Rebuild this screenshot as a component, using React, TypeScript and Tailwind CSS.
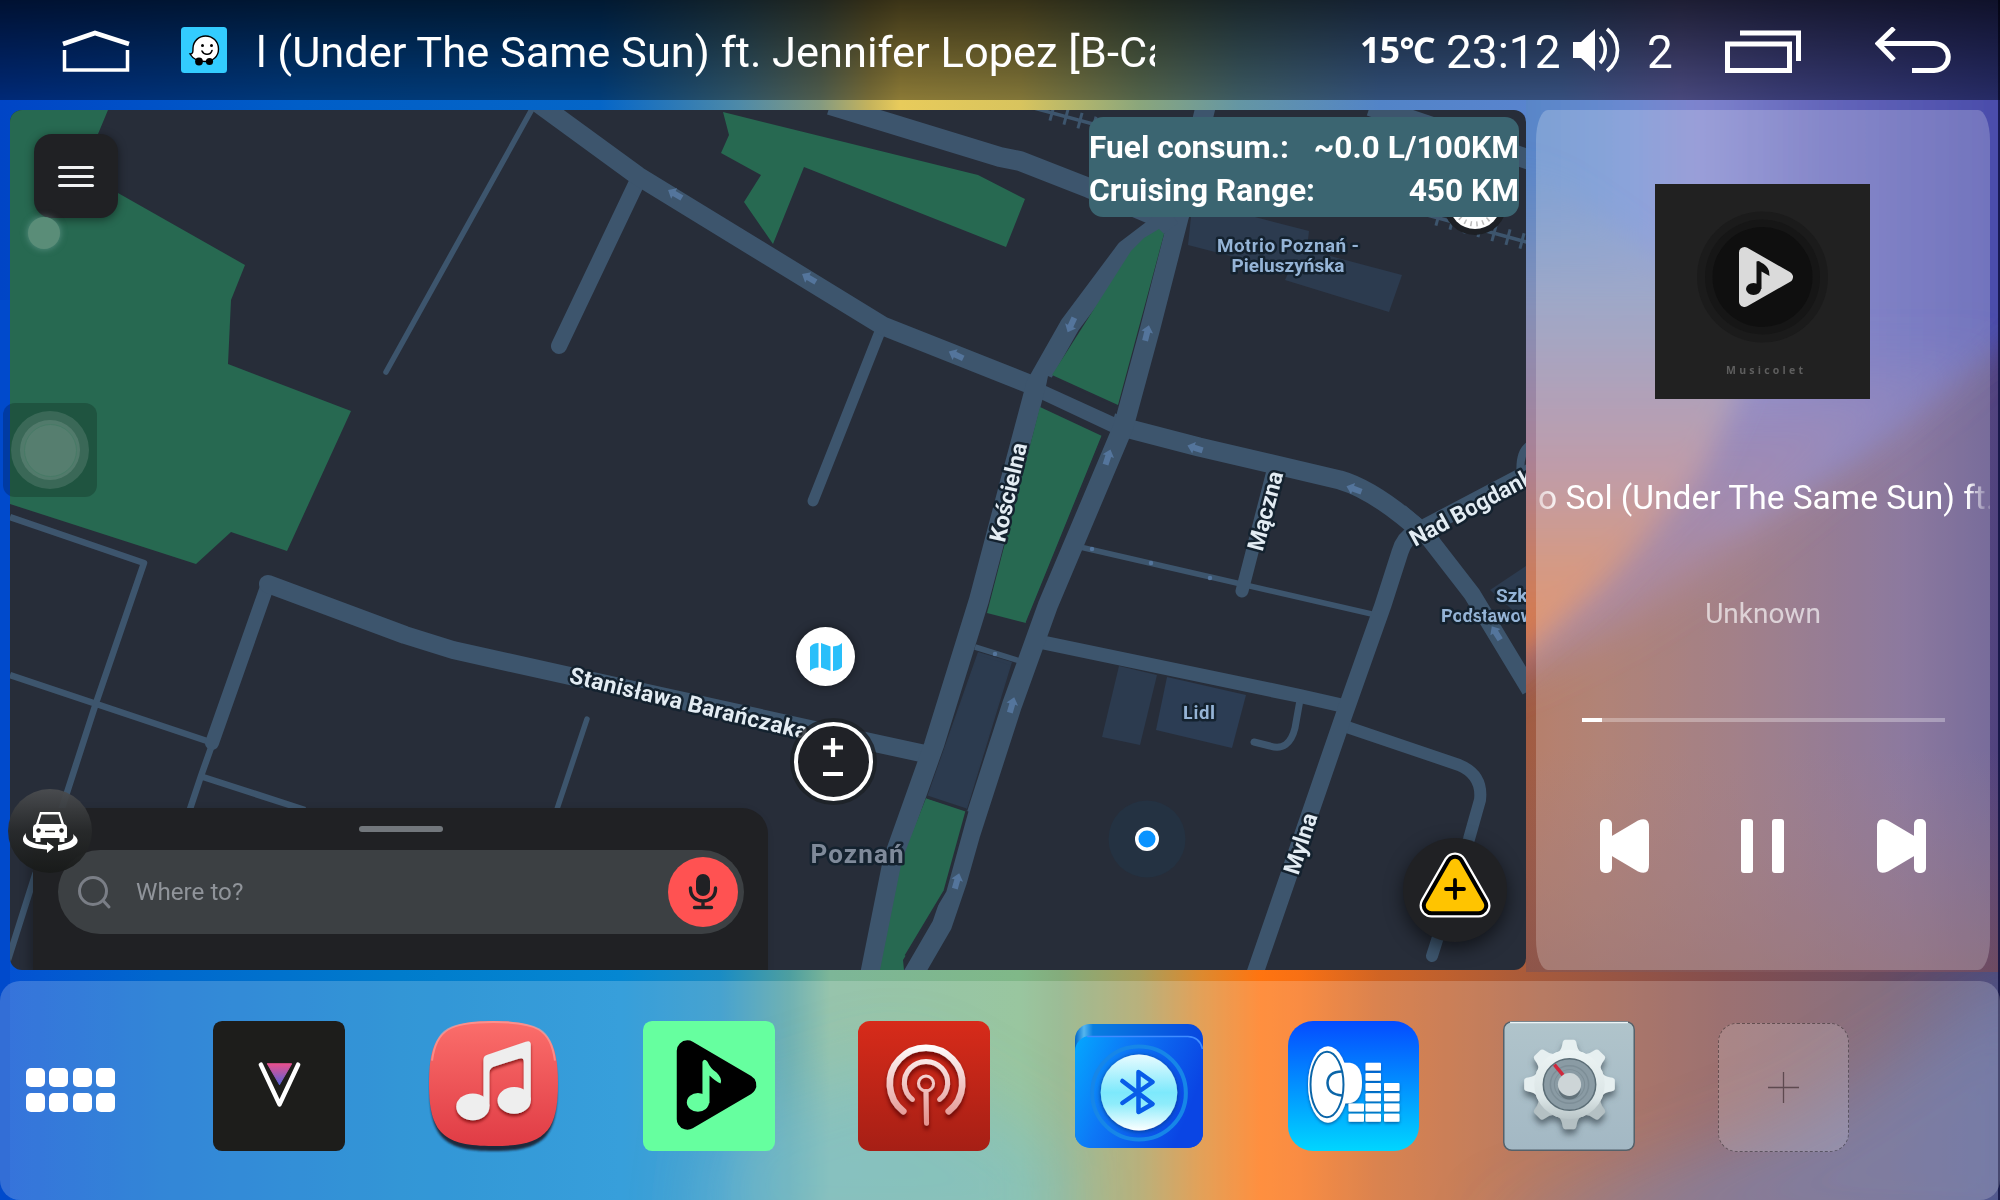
import React from "react";

const ROAD = "#3d556d";
const GREEN = "#276951";
const BUILDING = "#2c3b4f";

function Wallpaper() {
  return (
    <svg className="absolute inset-0 h-full w-full" viewBox="0 0 2000 1200" preserveAspectRatio="none">
      <defs>
        <linearGradient id="wTop">
          <stop offset="0" stopColor="#0045c6" />
          <stop offset=".15" stopColor="#005ec8" />
          <stop offset=".3" stopColor="#0566c8" />
          <stop offset=".37" stopColor="#4e8aa8" />
          <stop offset=".41" stopColor="#849a80" />
          <stop offset=".435" stopColor="#c5b35c" />
          <stop offset=".45" stopColor="#e8cb5b" />
          <stop offset=".51" stopColor="#d8c45e" />
          <stop offset=".57" stopColor="#8aa67c" />
          <stop offset=".62" stopColor="#6496a4" />
          <stop offset=".69" stopColor="#5284c8" />
          <stop offset=".78" stopColor="#5a84d0" />
          <stop offset=".84" stopColor="#7878cf" />
          <stop offset=".89" stopColor="#6064c2" />
          <stop offset="1" stopColor="#3f47a8" />
        </linearGradient>
        <linearGradient id="wBottom">
          <stop offset="0" stopColor="#0450d2" />
          <stop offset=".08" stopColor="#0068ce" />
          <stop offset=".2" stopColor="#007ccc" />
          <stop offset=".31" stopColor="#0587d2" />
          <stop offset=".36" stopColor="#1a8cc4" />
          <stop offset=".395" stopColor="#4e9fa0" />
          <stop offset=".415" stopColor="#7db698" />
          <stop offset=".51" stopColor="#80b888" />
          <stop offset=".53" stopColor="#84ac7c" />
          <stop offset=".57" stopColor="#a89e5c" />
          <stop offset=".6" stopColor="#dc8a30" />
          <stop offset=".63" stopColor="#ff7410" />
          <stop offset=".65" stopColor="#f87014" />
          <stop offset=".69" stopColor="#d06424" />
          <stop offset=".77" stopColor="#a65a3c" />
          <stop offset=".86" stopColor="#844e4e" />
          <stop offset=".94" stopColor="#6a4c60" />
          <stop offset="1" stopColor="#4e4a78" />
        </linearGradient>
        <linearGradient id="wLow">
          <stop offset="0" stopColor="#a25c42" />
          <stop offset=".15" stopColor="#9c6050" />
          <stop offset=".45" stopColor="#885d68" />
          <stop offset=".8" stopColor="#6c5484" />
          <stop offset="1" stopColor="#50427e" />
        </linearGradient>
        <linearGradient id="wFade" x1="0" y1="0" x2="0" y2="1">
          <stop offset="0" stopColor="#885d68" stopOpacity="0" />
          <stop offset="1" stopColor="#80504e" stopOpacity=".6" />
        </linearGradient>
        <linearGradient id="wUp" gradientUnits="userSpaceOnUse" x1="1526" y1="0" x2="2000" y2="0">
          <stop offset="0" stopColor="#5886c8" />
          <stop offset=".2" stopColor="#688ad0" />
          <stop offset=".36" stopColor="#7f84ce" />
          <stop offset=".6" stopColor="#6668bc" />
          <stop offset="1" stopColor="#4a4caa" />
        </linearGradient>
        <linearGradient id="wMauve" gradientUnits="userSpaceOnUse" x1="0" y1="340" x2="0" y2="570">
          <stop offset="0" stopColor="#796aab" stopOpacity="0" />
          <stop offset=".4" stopColor="#7d6aa8" />
          <stop offset="1" stopColor="#956a88" />
        </linearGradient>
        <linearGradient id="wWarm" gradientUnits="userSpaceOnUse" x1="0" y1="160" x2="0" y2="640">
          <stop offset="0" stopColor="#7c90ba" stopOpacity="0" />
          <stop offset=".3" stopColor="#8490b8" />
          <stop offset=".5" stopColor="#9c86a4" />
          <stop offset=".65" stopColor="#ae8090" />
          <stop offset=".82" stopColor="#c67e66" />
          <stop offset="1" stopColor="#d87a4c" />
        </linearGradient>
        <clipPath id="rightSide">
          <rect x="1526" y="100" width="474" height="872" />
        </clipPath>
        <filter id="soft" x="1200" y="-200" width="1200" height="1400" filterUnits="userSpaceOnUse">
          <feGaussianBlur stdDeviation="14" />
        </filter>
        <filter id="haze" x="1200" y="-200" width="1200" height="1400" filterUnits="userSpaceOnUse">
          <feGaussianBlur stdDeviation="22" />
        </filter>
        <filter id="softer" x="-400" y="600" width="2800" height="1000" filterUnits="userSpaceOnUse">
          <feGaussianBlur stdDeviation="35" />
        </filter>
      </defs>
      <rect width="2000" height="540" fill="url(#wTop)" />
      <rect y="540" width="2000" height="660" fill="url(#wBottom)" />
      <g filter="url(#softer)">
        <path d="M720 1120L900 1060L1060 1150V1260H700z" fill="#58aec8" opacity=".5" />
        <path d="M1480 1240L1800 1120L2050 960V1260z" fill="#5868a4" opacity=".6" />
      </g>
      <rect width="10" height="1000" y="300" fill="#004acc" />
      <g clipPath="url(#rightSide)">
        <rect x="1526" y="100" width="474" height="872" fill="url(#wLow)" />
        <rect x="1526" y="750" width="474" height="225" fill="url(#wFade)" />
        <path d="M1440 -20H2100V280L1990 355L1850 457L1733 520L1640 530L1440 540z" fill="url(#wUp)" filter="url(#soft)" />
        <path d="M2080 310L1990 360L1850 455L1733 548L1620 620L1530 665L1440 700V560L1700 300L2080 200z" fill="url(#wMauve)" filter="url(#haze)" />
        <path d="M1400 100L1560 180L1755 330L1735 403L1702 473L1645 540L1600 588L1530 650L1400 760z" fill="url(#wWarm)" filter="url(#soft)" />
      </g>
      <rect x="1998" width="2" height="1200" fill="#0b0e3c" opacity=".8" />
    </svg>
  );
}

function StatusBar() {
  return (
    <header className="relative flex h-[100px] shrink-0 items-center bg-linear-to-b from-black/75 to-black/40 text-white">
      <svg className="ml-[60px] h-[46px] w-[72px]" viewBox="0 0 72 46" fill="none" stroke="#fff" strokeWidth="4">
        <path d="M3 17L35 6L69 17" strokeWidth="4.600" />
        <path d="M4.500 23V43H67.500V23" strokeWidth="3.500" />
      </svg>
      <svg className="ml-[49px] h-[46px] w-[46px]" viewBox="0 0 46 46">
        <rect width="46" height="46" rx="3.500" fill="#33ccff" />
        <path d="M24.500 9C31.500 9 37.500 14.300 37.500 22C37.500 29.500 32 34.500 24 34.500C17 34.500 12 32 9 27C12 27 12 25 12 21C12.300 14 18 9 24.500 9z" fill="#fff" stroke="#000" strokeWidth="1.400" />
        <circle cx="18" cy="34.500" r="3.900" />
        <circle cx="28.500" cy="34.500" r="3.600" />
        <circle cx="21.500" cy="18.500" r="1.500" />
        <circle cx="30.500" cy="18.500" r="1.500" />
        <path d="M21 24C23 28.500 29.500 28.500 31 23.500" fill="none" stroke="#000" strokeWidth="1.600" strokeLinecap="round" />
      </svg>
      <div className="ml-[29px] mt-[5px] w-[899px] overflow-hidden whitespace-nowrap font-[Roboto,sans-serif] text-[43.400px] leading-[60px]">
        l (Under The Same Sun) ft. Jennifer Lopez [B-Case]
      </div>
      <div className="ml-[205px] w-[86px] whitespace-nowrap font-['Noto_Sans','Noto_Sans_CJK_SC',sans-serif] text-[35.500px] font-bold leading-none tracking-[-0.500px]">15℃</div>
      <div className="mt-[4px] w-[118px] whitespace-nowrap font-[Roboto,sans-serif] text-[46px] leading-none">23:12</div>
      <svg className="ml-[9px] h-[46px] w-[48px]" viewBox="0 0 48 46">
        <path d="M0 15h8L22 2v42L8 31H0z" fill="#fff" />
        <path d="M27 10c7 7 7 19 0 26M34 2c14 11 14 31 0 42" fill="none" stroke="#fff" strokeWidth="3.600" />
      </svg>
      <div className="ml-[26px] mt-[4px] w-[30px] font-[Roboto,sans-serif] text-[46px] leading-none">2</div>
      <svg className="ml-[47px] mt-[1px] h-[44px] w-[80px]" viewBox="0 0 80 44" fill="none" stroke="#fff">
        <rect x="3.500" y="15" width="62" height="26.500" strokeWidth="5" />
        <path d="M16 4H74.500V32" strokeWidth="5" />
      </svg>
      <svg className="ml-[71px] h-[46px] w-[78px]" viewBox="0 0 78 46" fill="none" stroke="#fff" strokeWidth="5">
        <path d="M19 1L3 16.500L19 33" />
        <path d="M3 16.500H59C78 17 78 43 59 43.500H37" />
      </svg>
    </header>
  );
}

function RoadArrow({ x, y, r }: { x: number; y: number; r: number }) {
  return <path transform={`translate(${x} ${y}) rotate(${r})`} d="M0-8L6-1H3V8H-3V-1H-6z" fill="#54759c" />;
}

const label = { stroke: "#14222f", strokeWidth: 5, paintOrder: "stroke", strokeLinejoin: "round" } as const;

function MapCanvas() {
  const ticks = Array.from({ length: 7 }, (_, i) => i);
  return (
    <svg className="absolute inset-0 h-full w-full" viewBox="10 110 1516 860">
      <rect x="10" y="110" width="1516" height="860" fill="#272d39" />
      <g fill={GREEN}>
        <path d="M10 110H108L98 134L118 193L245 265L231 300L228 364L351 411L287 551L231 532L196 564L10 504z" />
        <path d="M723 112L978 175L1025 199L1006 247L804 167L773 244L744 202L761 175L721 153L729 135z" />
      </g>
      <g fill={BUILDING}>
        <path d="M1191 217H1255L1309 231L1304 275L1188 245z" />
        <path d="M1300 248L1402 275L1389 312L1285 280z" />
        <path d="M1119 666L1157 675L1140 745L1102 737z" />
        <path d="M1167 677L1246 695L1232 748L1156 730z" fill="#2c3d54" />
        <path d="M978 652L1012 662L967 809L927 797z" />
        <path d="M1526 566L1490 590L1526 622z" />
      </g>
      <g stroke={ROAD} fill="none" strokeLinejoin="round">
        <path d="M1030 107L1160 142M1420 213L1530 243" strokeWidth="3.500" />
        {ticks.map((i) => (
          <path key={i} d="M0-8V8" strokeWidth="3" transform={`translate(${1052 + i * 14} ${113 + i * 3.83}) rotate(15)`} />
        ))}
        {ticks.map((i) => (
          <path key={i} d="M0-8V8" strokeWidth="3" transform={`translate(${1438 + i * 14} ${218 + i * 3.83}) rotate(15)`} />
        ))}
        <path d="M830 105L1000 157L1020 161L1089 188L1170 222" strokeWidth="20" />
        <path d="M1370 106L1530 160" strokeWidth="20" />
        <path d="M10 517L144 563L96 703L62 808L35 875L8 960M10 675L207 741" strokeWidth="6.500" />
        <path d="M212 745L201 776L188 815M203 777L305 810" strokeWidth="6.500" />
        <path d="M587 719L556 812" strokeWidth="5.500" strokeLinecap="round" />
        <path d="M531 111L386 372" strokeWidth="5.500" strokeLinecap="round" />
        <path d="M638 180L559 346" strokeWidth="16" strokeLinecap="round" />
        <path d="M881 329L813 501" strokeWidth="11" strokeLinecap="round" />
        <path d="M268 584L212 743" strokeWidth="14" strokeLinecap="round" />
        <path d="M268 584L405 635L453 650L570 676L810 729L930 755" strokeWidth="18" strokeLinecap="round" />
        <path d="M1080 547L1376 615M975 647L1020 661" strokeWidth="5.500" />
        <path d="M1300 700L1295 728Q1289 752 1270 746L1254 742" strokeWidth="7" strokeLinecap="round" />
        <path d="M1036 641L1300 696L1344 706" strokeWidth="14" />
        <path d="M1344 726L1459 765Q1483 775 1480 800L1469 839L1432 956" strokeWidth="12" strokeLinecap="round" />
        <path d="M1274 467L1242 591" strokeWidth="13" strokeLinecap="round" />
        <path d="M1530 472L1416 532Q1404 538 1400 552L1383 605L1344 715L1254 976" strokeWidth="17" />
        <path d="M1530 445Q1518 452 1521 478" strokeWidth="8" />
        <path d="M1400 512L1424 532L1472 594L1530 690" strokeWidth="17" />
        <path d="M538 103L638 176L883 326L1037 387L1122 427L1199 447L1340 480Q1375 490 1424 534" strokeWidth="19" />
        <path d="M1206 105L1180 212L1150 329L1124 425L1048 605L1012 705L970 835L957 881L942 925L913 975" strokeWidth="20" />
        <path d="M1172 215L1126 250L1070 325L1036 385L1008 490L979 600L934 745L893 860L870 975" strokeWidth="20" />
      </g>
      <path d="M1048 376L1117 407L1114 417L1046 386z" fill="#272d39" />
      <g fill={GREEN}>
        <path d="M1159 229L1164 234L1118 405L1052 375L1131 251L1144 238z" />
        <path d="M1040 407L1102 436L1026 623L987 613z" />
        <path d="M926 798L967 811L945 891L903 960L904 970H880L902 860z" />
      </g>
      <path d="M978 655L1010 665L966 808L928 797z" fill={BUILDING} />
      <path d="M1103 436L1027 623M927 797L966 810M967 811L945 891L906 956" fill="none" stroke="#272d39" strokeWidth="3" />
      <g>
        <RoadArrow x={675} y={194} r={-60} />
        <RoadArrow x={809} y={278} r={-60} />
        <RoadArrow x={956} y={355} r={-65} />
        <RoadArrow x={1195} y={448} r={-72} />
        <RoadArrow x={1354} y={489} r={-70} />
        <RoadArrow x={1071} y={325} r={205} />
        <RoadArrow x={1147} y={333} r={14} />
        <RoadArrow x={1108} y={457} r={18} />
        <RoadArrow x={1012} y={705} r={16} />
        <RoadArrow x={957} y={881} r={16} />
        <RoadArrow x={1496} y={633} r={-32} />
        <path d="M1092 549h0M1151 563h0M1210 578h0M995 654h0" stroke="#54759c" strokeWidth="4.500" strokeLinecap="round" />
      </g>
      <circle cx="1475" cy="203" r="32" fill="#1d2025" />
      <circle cx="1475" cy="203" r="26" fill="#fff" />
      <circle cx="1475" cy="203" r="21" fill="none" stroke="#bbb" strokeWidth="5" strokeDasharray="1.500 4.500" />
      <g fontFamily="Roboto, sans-serif" fontWeight="700" textAnchor="middle">
        <g {...label} fill="#e3ecf3" fontSize="23">
          <text transform="translate(1016 494) rotate(-77)">Kościelna</text>
          <text transform="translate(1273 513) rotate(-75)">Mączna</text>
          <text transform="translate(1308 846) rotate(-72)">Mylna</text>
          <text transform="translate(687 711) rotate(13.500)" textLength="244">Stanisława Barańczaka</text>
          <text transform="translate(1415 547) rotate(-28.500)" textAnchor="start" textLength="149">Nad Bogdanką</text>
        </g>
        <g {...label} fill="#95b4d6" fontSize="19">
          <text x="1288" y="252" textLength="142">Motrio Poznań -</text>
          <text x="1288" y="272">Pieluszyńska</text>
          <text x="1199" y="719" textLength="32">Lidl</text>
          <text x="1496" y="602" textAnchor="start">Szkoła</text>
          <text x="1441" y="622" textAnchor="start" textLength="103">Podstawowa</text>
        </g>
        <text x="857" y="863" fontSize="26" {...label} fill="#7f8a9a" textLength="93">Poznań</text>
      </g>
      <circle cx="1147" cy="839" r="38.500" fill="#243242" />
      <circle cx="1147" cy="839" r="12" fill="#fff" />
      <circle cx="1147" cy="839" r="8.500" fill="#0a93ff" />
    </svg>
  );
}

function SearchSheet() {
  return (
    <div className="absolute bottom-0 left-[23px] flex h-[162px] w-[735px] flex-col items-center rounded-tr-[26px] bg-[#202124] pl-[25px] pr-[24px] shadow-[-4px_4px_10px_rgba(0,0,0,0.25)]">
      <div className="mt-[18px] h-[6px] w-[84px] rounded-full bg-[#72777c]" />
      <div className="mt-[18px] flex h-[84px] w-full items-center rounded-full bg-[#3c4043] pl-[19px] pr-[6px]">
        <svg className="h-[36px] w-[36px]" viewBox="0 0 36 36" fill="none" stroke="#7a7e86" strokeWidth="3" strokeLinecap="round">
          <circle cx="16" cy="17" r="13.500" />
          <path d="M26 26.500L32 33" />
        </svg>
        <span className="ml-[23px] flex-1 font-[Roboto,sans-serif] text-[24.200px] text-[#90949a]">Where to?</span>
        <div className="flex h-[70px] w-[70px] items-center justify-center rounded-full bg-[#ff5252]">
          <svg className="h-[36px] w-[30px]" viewBox="0 0 30 36">
            <rect x="8" y="0" width="14" height="22" rx="7" fill="#202124" />
            <path d="M2.500 14v1c0 16 25 16 25 0v-1M15 27v6M6.500 33.500h17" fill="none" stroke="#202124" strokeWidth="3.400" strokeLinecap="round" />
          </svg>
        </div>
      </div>
    </div>
  );
}

function MapPanel() {
  return (
    <section className="relative h-full w-[1516px] shrink-0">
      <div className="absolute inset-0 overflow-hidden rounded-xl">
        <MapCanvas />
        <SearchSheet />
      </div>
      <div className="absolute left-[24px] top-[24px] flex h-[84px] w-[84px] flex-col items-center justify-center gap-[6px] rounded-[18px] bg-[#202124] shadow-[0_2px_10px_rgba(0,0,0,0.45)]">
        <span className="h-[3px] w-[36px] rounded-full bg-[#f1f3f4]" />
        <span className="h-[3px] w-[36px] rounded-full bg-[#f1f3f4]" />
        <span className="h-[3px] w-[36px] rounded-full bg-[#f1f3f4]" />
      </div>
      <div className="absolute left-[18px] top-[107px] h-[32px] w-[32px] rounded-full bg-[#5a8d78] shadow-[0_0_7px_rgba(150,190,190,0.5)]" />
      <div className="absolute left-[-7px] top-[293px] flex h-[94px] w-[94px] items-center justify-center rounded-xl bg-black/20">
        <div className="flex h-[78px] w-[78px] items-center justify-center rounded-full bg-white/12">
          <div className="flex h-[60px] w-[60px] items-center justify-center rounded-full bg-white/12">
            <div className="h-[53px] w-[53px] rounded-full border border-[#477a66] bg-white/3" />
          </div>
        </div>
      </div>
      <div className="absolute left-[-2px] top-[679px] flex h-[84px] w-[84px] items-center justify-center rounded-full bg-linear-to-b from-[#4b4d50]/95 via-[#282a2b]/90 to-[#181a19]/95">
        <svg className="h-[44px] w-[58px]" viewBox="0 0 58 44">
          <path fillRule="evenodd" d="M19 3h20l4 12q3 1 3 4v10h-2.500v4h-5v-4h-19v4h-5v-4H12V19q0-3 3-4zM20.500 5.500L17.500 15h23l-3-9.500z" fill="#fff" />
          <circle cx="17.500" cy="21.500" r="2.200" fill="#222" />
          <circle cx="40.500" cy="21.500" r="2.200" fill="#222" />
          <path d="M24 22.500h10" stroke="#222" strokeWidth="1.500" />
          <path d="M5 24C-4 34 8 40 26 40.500v3.500l7-6-7-5v3C14 36 3 32 5 24z" fill="#fff" />
          <path d="M52 25c2 6-4 9-15 11v6C53 40 60 34 55 28z" fill="#fff" />
        </svg>
      </div>
      <div className="absolute left-[1079px] top-[7px] flex h-[100px] w-[430px] flex-col rounded-[14px] bg-[#3b6571] pt-[9px] font-[Roboto,sans-serif] text-[31.700px] font-bold leading-[43px] text-white">
        <div className="flex justify-between whitespace-nowrap"><span>Fuel consum.:</span><span>~0.0 L/100KM</span></div>
        <div className="flex justify-between whitespace-nowrap"><span>Cruising Range:</span><span>450 KM</span></div>
      </div>
      <div className="absolute left-[786px] top-[517px] flex h-[59px] w-[59px] items-center justify-center rounded-full bg-white shadow-[0_0_8px_rgba(0,0,0,0.5)]">
        <svg className="h-[28px] w-[34px]" viewBox="0 0 34 28" fill="#29bffa">
          <path d="M1 4Q4 0 9.500 0V24.500Q4 24.500 1 28z" />
          <path d="M12 0L21.500 3.500V28L12 24.500z" />
          <path d="M24 3.500Q30 3 33 0V24Q30 27.500 24 28z" />
        </svg>
      </div>
      <div className="absolute left-[784px] top-[612px] flex h-[79px] w-[79px] items-center justify-center rounded-full border-[4px] border-white bg-[#202227] shadow-[0_0_0_4px_rgba(29,32,37,0.8)]">
        <svg className="mb-[5px] mr-[1px] h-[40px] w-[20px] overflow-visible" viewBox="0 0 20 40" stroke="#fff" strokeWidth="4.200">
          <path d="M0 8.500h20M10-1v19M0 35h20" />
        </svg>
      </div>
      <div className="absolute left-[1393px] top-[728px] flex h-[104px] w-[104px] items-center justify-center rounded-full bg-[#202124] shadow-[0_6px_18px_rgba(0,0,0,0.55)]">
        <svg className="h-[76px] w-[76px]" viewBox="0 0 76 76" strokeLinejoin="round">
          <path d="M38 12.500L61.500 53.500H14.500z" stroke="#fff" strokeWidth="24" fill="#fff" />
          <path d="M38 12.500L61.500 53.500H14.500z" stroke="#000" strokeWidth="19.500" fill="#000" />
          <path d="M38 12.500L61.500 53.500H14.500z" stroke="#ffc400" strokeWidth="11.500" fill="#ffc400" />
          <path d="M29 37h18M38 28v18" stroke="#000" strokeWidth="3.800" strokeLinecap="round" />
        </svg>
      </div>
    </section>
  );
}

function AlbumArt() {
  return (
    <div className="mr-[1px] mt-[74px] h-[215px] w-[215px] bg-[#212121]">
      <svg className="h-full w-full" viewBox="0 0 215 215">
        <circle cx="107.500" cy="93" r="65.500" fill="#1b1b1b" />
        <circle cx="107.500" cy="93" r="57.500" fill="#161616" />
        <circle cx="107.500" cy="93" r="50" fill="#0f0f0f" />
        <path d="M89.500 68.500L132.500 93L89.500 117.500z" fill="#dadada" stroke="#dadada" strokeWidth="11" strokeLinejoin="round" />
        <ellipse cx="98.500" cy="105" rx="7.500" ry="6" fill="#0f0f0f" />
        <path d="M101.500 105V77.500Q104 76 106 78.500Q112 81 114 87L114.500 92L106.500 87.500V105z" fill="#0f0f0f" />
        <text x="71" y="190" textLength="77" fontFamily="Open Sans, sans-serif" fontWeight="700" fontSize="10.500" fill="#5e5e5e">Musicolet</text>
      </svg>
    </div>
  );
}

function MediaPanel() {
  return (
    <section className="flex h-full w-[454px] shrink-0 flex-col items-center overflow-hidden bg-white/22 text-white [border-radius:12px/30px]">
      <AlbumArt />
      <div className="mt-[75px] flex h-[48px] w-full overflow-hidden whitespace-nowrap pl-[2px] font-[Roboto,sans-serif] text-[33.500px] leading-[48px] [mask-image:linear-gradient(90deg,rgba(0,0,0,0.5),#000_6%,#000_95%,rgba(0,0,0,0.2)_99%)]">
        <span className="shrink-0">o Sol (Under The Same Sun) ft.</span>
      </div>
      <div className="mt-[71px] font-[Roboto,sans-serif] text-[28px] leading-[42px] text-white/65">Unknown</div>
      <div className="ml-[1px] mt-[83px] h-[4px] w-[363px] bg-white/30">
        <div className="h-full w-[20px] bg-white" />
      </div>
      <div className="mt-[97px] flex w-[326px] items-center justify-between">
        <svg className="h-[54px] w-[49px]" viewBox="0 0 49 54" fill="#fff">
          <rect width="12" height="54" rx="5" />
          <path d="M11 17.500L38 1.500Q49-3 49 8V46Q49 57 38 52.500L11 36.500z" />
        </svg>
        <svg className="mr-[1px] h-[54px] w-[43px]" viewBox="0 0 43 54" fill="#fff">
          <rect width="12" height="54" rx="3" />
          <rect x="31" width="12" height="54" rx="3" />
        </svg>
        <svg className="h-[54px] w-[49px] -scale-x-100" viewBox="0 0 49 54" fill="#fff">
          <rect width="12" height="54" rx="5" />
          <path d="M11 17.500L38 1.500Q49-3 49 8V46Q49 57 38 52.500L11 36.500z" />
        </svg>
      </div>
    </section>
  );
}

function VancedIcon() {
  return (
    <svg viewBox="0 0 131 131" preserveAspectRatio="none" className="h-[130px] w-[132px]">
      <defs><linearGradient id="van" x1="0" y1="0" x2="0" y2="1"><stop offset="0" stopColor="#e8508e" /><stop offset="1" stopColor="#5b62d6" /></linearGradient></defs>
      <rect width="131" height="131" rx="9" fill="#1d1d1b" />
      <path d="M54 43H78L66 64z" fill="url(#van)" stroke="url(#van)" strokeLinejoin="round" />
      <path d="M47.500 44L66 84L84.500 44" fill="none" stroke="#fff" strokeWidth="4.500" strokeLinejoin="round" strokeLinecap="round" />
    </svg>
  );
}

function MusicIcon() {
  return (
    <svg viewBox="0 0 131 131" preserveAspectRatio="none" className="h-[130px] w-[132px] overflow-visible">
      <defs>
        <linearGradient id="mus" x1="0" y1="0" x2="0" y2="1"><stop offset="0" stopColor="#fb6e6b" /><stop offset="1" stopColor="#e03c45" /></linearGradient>
        <filter id="ds"><feDropShadow dx="0" dy="2.500" stdDeviation="1.500" floodColor="#600" floodOpacity=".7" /></filter>
        <filter id="ms"><feGaussianBlur stdDeviation="1" /></filter>
      </defs>
      <path d="M65 5C114 5 128 18 128 68S114 131 65 131S2 118 2 68S16 5 65 5z" fill="#1e2a3c" filter="url(#ms)" />
      <path d="M65 0C115 0 129 13 129 63S115 126 65 126S1 113 1 63S15 0 65 0z" fill="url(#mus)" />
      <path d="M4 40C8 8 22 1 65 1S122 8 126 40" fill="none" stroke="#ffa6a2" strokeOpacity=".6" strokeWidth="2" />
      <g fill="#eee" filter="url(#ds)">
        <path d="M55 86V39Q55 35 59 34L97 21Q102 19 102 24V80H95V41Q95 36 90 38L65 46Q61 48 61 52V86z" />
        <ellipse cx="44.500" cy="86.500" rx="16.500" ry="13.500" />
        <ellipse cx="85.500" cy="80" rx="16.500" ry="13.500" />
      </g>
    </svg>
  );
}

function MusicoletIcon() {
  return (
    <svg viewBox="0 0 131 131" preserveAspectRatio="none" className="h-[130px] w-[132px]">
      <rect width="131" height="131" rx="9" fill="#66ff9f" />
      <path d="M44 30L102 64.500L44 99z" stroke="#000" strokeWidth="21" strokeLinejoin="round" />
      <ellipse cx="54.500" cy="82" rx="11" ry="9.500" fill="#66ff9f" />
      <path d="M59 83V41Q61 37 64 41Q67 48 73 52Q79 58 77 63Q72 61 66 55V83z" fill="#66ff9f" />
    </svg>
  );
}

function PodcastIcon() {
  return (
    <svg viewBox="0 0 131 131" preserveAspectRatio="none" className="h-[130px] w-[132px]">
      <defs>
        <linearGradient id="pod" x1="0" y1="0" x2="0" y2="1"><stop offset="0" stopColor="#d72b1a" /><stop offset="1" stopColor="#a61f15" /></linearGradient>
        <linearGradient id="podS" gradientUnits="userSpaceOnUse" x1="0" y1="23" x2="0" y2="100"><stop offset="0" stopColor="#fff" /><stop offset="1" stopColor="#e49490" /></linearGradient>
        <filter id="ps" x="-20%" y="-20%" width="150%" height="150%"><feDropShadow dx="0" dy="4" stdDeviation="2" floodColor="#500" floodOpacity=".75" /></filter>
      </defs>
      <rect width="131" height="131" rx="12" fill="url(#pod)" />
      <g fill="none" stroke="url(#podS)" strokeLinecap="round" filter="url(#ps)" transform="translate(-1 0)">
        <path d="M46 91A36 36 0 1 1 91 91" strokeWidth="6.500" />
        <path d="M55 79A21.500 21.500 0 1 1 82 79" strokeWidth="5" />
        <circle cx="68.500" cy="63" r="7.500" strokeWidth="3" />
        <path d="M68.500 71L69 103" strokeWidth="5" />
      </g>
    </svg>
  );
}

function BluetoothIcon() {
  return (
    <svg viewBox="0 0 131 131" preserveAspectRatio="none" className="h-[131px] w-[132px]">
      <defs>
        <linearGradient id="bt1" x1="0" y1="0" x2="1" y2="0"><stop offset="0" stopColor="#0067c8" /><stop offset=".07" stopColor="#55b6ee" /><stop offset=".14" stopColor="#087ee0" /><stop offset="1" stopColor="#0847e0" /></linearGradient>
        <linearGradient id="bt2" x1="0" y1="0" x2="1" y2=".35"><stop offset="0" stopColor="#04a8ff" /><stop offset=".4" stopColor="#0d78f6" /><stop offset="1" stopColor="#0a45e4" /></linearGradient>
        <linearGradient id="bt3" x1="0" y1="0" x2="0" y2="1"><stop offset="0" stopColor="#e9fbff" /><stop offset=".5" stopColor="#7de9fc" /><stop offset=".65" stopColor="#8eecfb" /><stop offset="1" stopColor="#fcffff" /></linearGradient>
        <filter id="bs"><feDropShadow dx="0" dy="1" stdDeviation="2.500" floodColor="#003a90" /></filter>
      </defs>
      <rect x="2" y="3" width="127" height="124" rx="15" fill="url(#bt1)" />
      <rect x="2" y="15" width="127" height="112" rx="15" fill="url(#bt2)" />
      <path d="M14 15.500H114Q126 16 128.500 28" fill="none" stroke="#3f8cff" strokeWidth="1.500" />
      <circle cx="65.500" cy="72" r="46.500" fill="none" stroke="#1686e8" strokeWidth="4" />
      <circle cx="65.500" cy="71.500" r="38" fill="url(#bt3)" filter="url(#bs)" />
      <path d="M49 60L79 83L65 91V51L79 61L49 82" fill="none" stroke="#095ce8" strokeWidth="4.500" strokeLinejoin="round" strokeLinecap="round" />
    </svg>
  );
}

function EqualizerIcon() {
  const cols = [[60.5, 2], [77.5, 6], [96, 4]];
  return (
    <svg viewBox="0 0 131 131" preserveAspectRatio="none" className="h-[130px] w-[131px]">
      <defs>
        <linearGradient id="eq" x1="0" y1="0" x2="0" y2="1"><stop offset="0" stopColor="#044cff" /><stop offset="1" stopColor="#00d6ff" /></linearGradient>
        <filter id="es"><feDropShadow dx="0" dy="1.500" stdDeviation="1.500" floodColor="#003c80" floodOpacity=".7" /></filter>
      </defs>
      <rect width="131" height="131" rx="25" fill="url(#eq)" />
      <g fill="#fff" filter="url(#es)">
        <path d="M56 42H62Q74 44 74 62Q74 80 62 83H54z" />
        <ellipse cx="40" cy="64" rx="20" ry="38.500" />
        {cols.map(([x, n]) =>
          Array.from({ length: n }, (_, i) => <rect key={`${x}-${i}`} x={x} y={93.5 - i * 10.3} width="15.500" height="8" rx="1" />)
        )}
      </g>
      <ellipse cx="39" cy="64" rx="16.500" ry="33" fill="none" stroke="#0b65a8" strokeWidth="2" />
      <path d="M54 51Q40 51 39.500 62.500Q40 74 54 75" fill="none" stroke="#0b65a8" strokeWidth="2.500" />
    </svg>
  );
}

function SettingsIcon() {
  const teeth = [0, 45, 90, 135, 180, 225, 270, 315];
  return (
    <svg viewBox="0 0 131 131" preserveAspectRatio="none" className="ml-[1px] h-[130px] w-[132px]">
      <defs>
        <linearGradient id="st" x1="0" y1="0" x2="0" y2="1"><stop offset="0" stopColor="#b0c4cb" /><stop offset="1" stopColor="#a3b8c4" /></linearGradient>
        <linearGradient id="sg" gradientUnits="userSpaceOnUse" x1="0" y1="-45" x2="0" y2="45"><stop offset="0" stopColor="#f0f7f7" /><stop offset=".65" stopColor="#dbe5e6" /><stop offset="1" stopColor="#a9b6b9" /></linearGradient>
        <filter id="ss" x="-30%" y="-30%" width="160%" height="170%"><feDropShadow dx="0" dy="5" stdDeviation="3" floodColor="#46565e" floodOpacity=".8" /></filter>
      </defs>
      <rect x=".75" y=".75" width="129.500" height="129.500" rx="8" fill="url(#st)" stroke="#55616a" strokeWidth="1.500" />
      <path d="M7 1.500H124" stroke="#edf4f5" strokeWidth="1.500" />
      <g transform="translate(66 64)">
        <g filter="url(#ss)" fill="#d7e0e2">
          <circle r="35" fill="url(#sg)" />
          {teeth.map((t) => <path key={t} transform={`rotate(${t})`} d="M-12-32Q-8-34-7-41Q-6.500-45-4-45H4Q6.500-45 7-41Q8-34 12-32z" fill={t > 90 && t < 270 ? "#b4c0c3" : "#e6eff0"} />)}
        </g>
        <circle r="35" fill="url(#sg)" />
        <circle r="26" fill="#8a9ba4" stroke="#5c6e77" strokeWidth="1.500" />
        <circle r="19" fill="none" stroke="#7d8e97" strokeWidth="1.500" />
        <circle r="15" fill="none" stroke="#7d8e97" />
        <path d="M-15-20L-6-9" stroke="#d0283c" strokeWidth="3.500" />
        <circle cy="4" r="11" fill="#62727a" />
        <circle r="11.500" fill="#cdd5d7" />
      </g>
    </svg>
  );
}

function Dock() {
  return (
    <footer className="flex h-[219px] shrink-0 rounded-[20px] bg-white/20 pl-[26px] pt-[40px]">
      <div className="mt-[47px] grid h-[44px] w-[89px] shrink-0 grid-cols-4 gap-x-[4.500px] gap-y-[6px]">
        {Array.from({ length: 8 }, (_, i) => (
          <span key={i} className="h-[19px] w-[19px] rounded-[5px] bg-white" />
        ))}
      </div>
      <div className="ml-[98px] flex gap-[83px]">
        <VancedIcon />
        <MusicIcon />
        <MusicoletIcon />
        <PodcastIcon />
        <BluetoothIcon />
        <EqualizerIcon />
        <SettingsIcon />
        <div className="mt-[2px] flex h-[129px] w-[131px] items-center justify-center rounded-[19px] border border-dashed border-black/40 bg-white/15">
          <svg className="h-[31px] w-[31px]" viewBox="0 0 31 31" stroke="#5e4a50" strokeWidth="1.300"><path d="M0 15.500H31M15.500 0V31" /></svg>
        </div>
      </div>
    </footer>
  );
}

export default function App() {
  return (
    <div className="relative h-[1200px] w-[2000px] overflow-hidden">
      <Wallpaper />
      <div className="relative flex h-full flex-col">
        <StatusBar />
        <main className="mt-[10px] flex h-[860px] shrink-0 gap-[10px] pl-[10px]">
          <MapPanel />
          <MediaPanel />
        </main>
        <div className="h-[11px] shrink-0" />
        <Dock />
      </div>
    </div>
  );
}
